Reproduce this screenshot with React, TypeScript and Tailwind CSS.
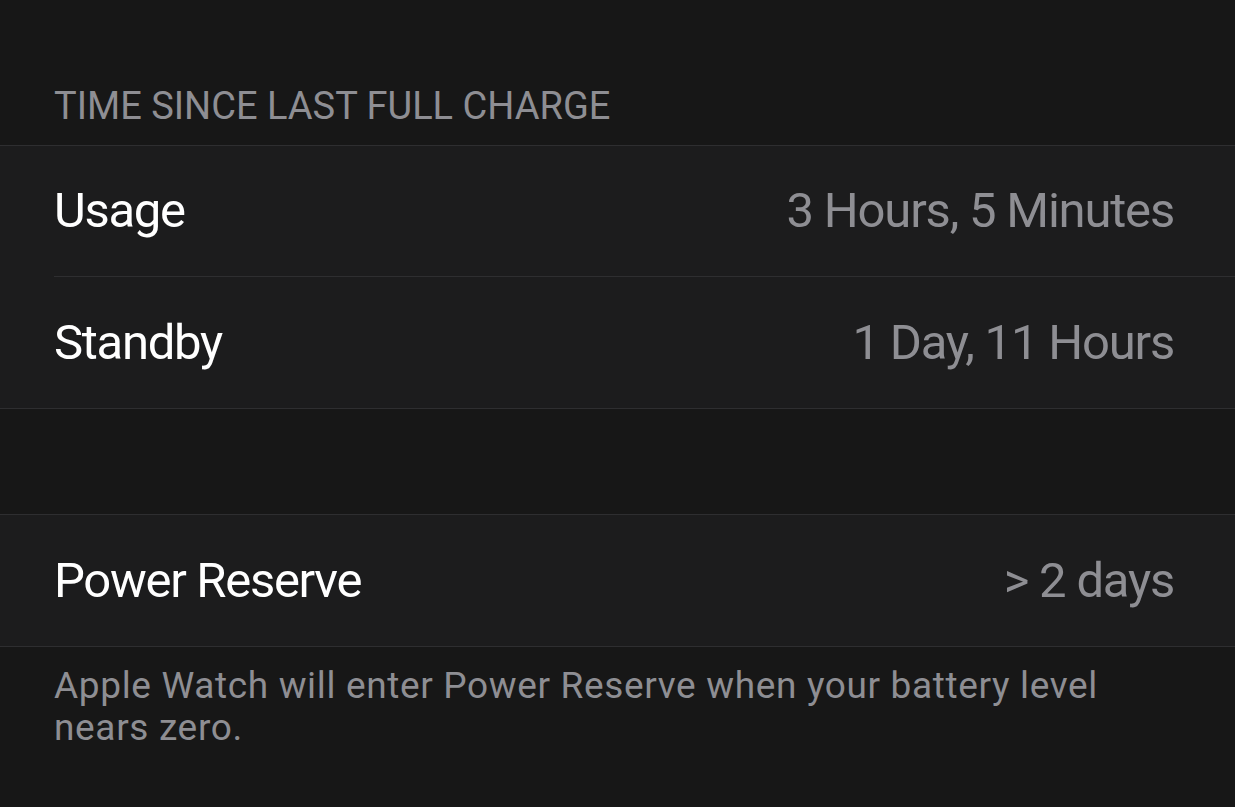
import React from 'react';

const font = { fontFamily: 'Roboto, "Noto Sans", sans-serif' };

function Row({ label, value, last }: { label: string; value: string; last?: boolean }) {
  return (
    <div className="bg-[#1c1c1d]">
      <div
        className={
          'ml-[54px] h-[131px] flex items-center justify-between pr-[61px] ' +
          (last ? '' : 'border-b border-[#2e2e30]')
        }
      >
        <span className="text-[49px] text-white tracking-[-1.3px]">{label}</span>
        <span className="text-[49px] text-[#8e8e93] tracking-[-1.2px]">{value}</span>
      </div>
    </div>
  );
}

export default function App() {
  return (
    <div className="min-h-screen w-full bg-[#171717]" style={font}>
      {/* Cabeçalho da seção */}
      <div className="h-[145px] flex items-end pl-[54px] pb-[20px]">
        <span className="text-[38px] leading-none text-[#8e8e93]">
          TIME SINCE LAST FULL CHARGE
        </span>
      </div>

      <div className="border-t border-b border-[#2e2e30]">
        <Row label="Usage" value="3 Hours, 5 Minutes" />
        <Row label="Standby" value="1 Day, 11 Hours" last />
      </div>

      <div className="h-[105px]" />

      <div className="border-t border-b border-[#2e2e30]">
        <Row label="Power Reserve" value="> 2 days" last />
      </div>

      <p className="pl-[54px] pr-[60px] pt-[18px] text-[37px] leading-[42px] text-[#8e8e93] tracking-[0.65px]">
        Apple Watch will enter Power Reserve when your battery level nears zero.
      </p>
    </div>
  );
}
